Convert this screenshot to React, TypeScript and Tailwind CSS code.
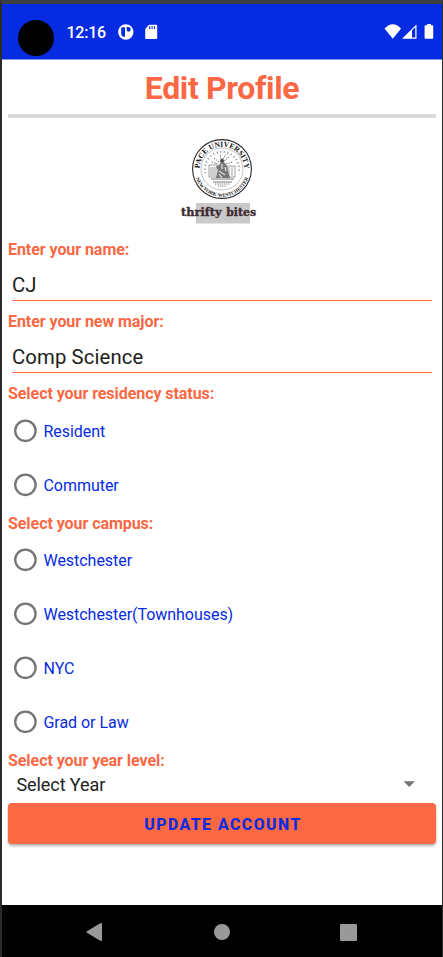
import React from "react";

function StatusBar() {
  return (
    <header className="flex h-[55px] shrink-0 items-start bg-[#062be0] text-white">
      <div className="mt-[16px] ml-[16px] size-[36px] rounded-full bg-black" />
      <span className="mt-[19px] ml-[12.4px] w-[40px] text-[16px] leading-[20px] font-medium tracking-[-0.2px] whitespace-nowrap">
        12:16
      </span>
      <svg className="mt-[20px] ml-[12px]" width="16" height="16" viewBox="0 0 16 16">
        <circle cx="7.8" cy="8" r="7.7" fill="#fff" />
        <path d="M3.2 4.2Q3.2 3.2 5.2 3.2H7V12.8H5.6Q3.2 12 3.2 10Z" fill="#062be0" />
        <path d="M8.6 3.1H10.4A2.3 2.3 0 0 1 10.4 7.7Q8.6 7.5 8.6 5.6Z" fill="#062be0" />
      </svg>
      <svg className="mt-[20px] ml-[9.6px]" width="14" height="16" viewBox="0 0 14 16">
        <path d="M5 .8H12Q13.2.8 13.2 2V14Q13.2 15 12 15H2.2Q1.2 15 1.2 14V5Z" fill="#fff" />
        <path d="M5.7 2.2V4.9M8.1 2.2V4.9M10.5 2.2V4.9" stroke="#062be0" strokeWidth="1.1" />
      </svg>
      <svg className="mt-[19px] mr-[8px] ml-auto" width="50" height="17" viewBox="0 0 50 17">
        <path d="M.5 5.6Q8.8-3 17.1 5.6L8.8 15.8Z" fill="#fff" />
        <path d="M18 15.8 32.5 1.5V15.8ZM28 7.5V14.6H31.3V4.3Z" fill="#fff" fillRule="evenodd" />
        <path d="M43.2 1H47V2.3H48.2Q49.2 2.3 49.2 3.3V14.8Q49.2 15.8 48.2 15.8H41.6Q40.6 15.8 40.6 14.8V3.3Q40.6 2.3 41.6 2.3H43.2Z" fill="#fff" />
      </svg>
    </header>
  );
}

function Logo() {
  return (
    <svg className="mx-auto block" width="100" height="100" viewBox="0 0 100 100" role="img" aria-label="Pace University thrifty bites">
      <defs>
        <path id="sealTop" d="M29.7 39A22.3 22.3 0 0 1 74.3 39" />
        <path id="sealBottom" d="M25.6 47.5A27.7 27.7 0 0 0 78.4 47.5" />
      </defs>
      <circle cx="52" cy="39" r="29.4" fill="#fff" stroke="#252525" strokeWidth="1.1" />
      <circle cx="52" cy="39" r="21" fill="none" stroke="#888" strokeWidth=".5" />
      <text fontFamily="Liberation Serif, serif" fontSize="7.6" fontWeight="700" fill="#111">
        <textPath href="#sealTop" textLength="69" startOffset=".5">PACE UNIVERSITY</textPath>
      </text>
      <text fontFamily="Liberation Serif, serif" fontSize="5.1" fontWeight="700" fill="#222">
        <textPath href="#sealBottom" textLength="68.5" startOffset=".7">NEW YORK·WESTCHESTER</textPath>
      </text>
      <path d="M35.5 43A17 17 0 1 1 68.5 43" fill="none" stroke="#888" strokeWidth="2" strokeDasharray="1 2.6" />
      <g fill="none" stroke="#555" strokeWidth=".8">
        <path d="M39 35H47V47H39ZM41 37V46M43 37V46M45 37V46M57 36H65V47H57ZM59 37V46M62 37V46" strokeOpacity=".7" />
        <path d="M49 32 44 28M48 34 41 32M54 31 59 27M56 34 63 32M51 29 50 24M53 29 56 24" strokeDasharray="1.5 1" />
        <path d="M41 49H64M43 52H62" />
        <path d="M45 54H60M48 56H57" strokeDasharray="1.2 1" />
      </g>
      <path d="M51 30Q54 29 54 32L57 36 58 41 60 48H46L48 40 46 37 50 34Z" fill="#777" />
      <path d="M52 34V39M49 41 55 45M49 44 52 48M55 37 56 41" stroke="#fff" strokeWidth="1" />
      <circle cx="52" cy="30.5" r="1.8" fill="#444" />
      <rect x="26" y="73" width="54" height="20.5" fill="#c9c9c9" />
      <g fontFamily="DejaVu Serif, serif" fontWeight="700" fontSize="10.4" fill="#3f2a32" stroke="#3f2a32" strokeWidth=".35">
        <text x="11" y="86.2" textLength="40.5" lengthAdjust="spacingAndGlyphs">thrifty</text>
        <text x="56.3" y="86.2" textLength="29.7" lengthAdjust="spacingAndGlyphs">bites</text>
      </g>
    </svg>
  );
}

function Label({ children }: { children: React.ReactNode }) {
  return (
    <div className="h-[21.6px] text-[16px] leading-[22px] font-bold tracking-[-0.06px] whitespace-nowrap text-[#fb6844]">
      {children}
    </div>
  );
}

function Field({ label, value }: { label: string; value: string }) {
  return (
    <div className="h-[72.3px]">
      <Label>{label}</Label>
      <div className="mx-[4px] mt-[8px] h-[33px] border-b-[1.5px] border-[#fb6844] text-[20.3px] leading-[34px] tracking-[0.12px] text-[#212121]">
        {value}
      </div>
    </div>
  );
}

function Choice({ text }: { text: string }) {
  return (
    <div className="flex h-[53.8px] items-center">
      <svg className="mb-[2px] ml-[5px] shrink-0" width="24" height="24" viewBox="0 0 24 24">
        <circle cx="12.4" cy="11.8" r="10.2" fill="none" stroke="#757575" strokeWidth="2.3" />
      </svg>
      <span className="ml-[6.5px] text-[16px] leading-[20px] tracking-[-0.04px] whitespace-nowrap text-[#062be0]">{text}</span>
    </div>
  );
}

export default function App() {
  return (
    <div className="flex h-[957px] w-[443px] flex-col overflow-hidden border-t-4 border-r border-l-2 border-t-[#3c3f41] border-r-[#2b2b2b] border-l-[#2b2b2b] bg-white font-['Roboto',sans-serif]">
      <StatusBar />
      <main className="flex-1 border-t border-[#8294ef] px-[6px]">
        <h1 className="h-[58px] border-b-4 border-[#d9d9d9] pt-[8px] text-center text-[32px] leading-[40px] font-bold tracking-[-0.35px] text-[#fb6844]">
          Edit Profile
        </h1>
        <div className="mt-[12px] h-[108.5px] pr-[4px]">
          <Logo />
        </div>
        <Field label="Enter your name:" value="CJ" />
        <Field label="Enter your new major:" value="Comp Science" />
        <Label>Select your residency status:</Label>
        <div className="pt-[0.4px]">
          <Choice text="Resident" />
          <Choice text="Commuter" />
        </div>
        <Label>Select your campus:</Label>
        <Choice text="Westchester" />
        <Choice text="Westchester(Townhouses)" />
        <Choice text="NYC" />
        <Choice text="Grad or Law" />
        <div className="pt-[0.3px]">
          <Label>Select your year level:</Label>
        </div>
        <div className="flex h-[26px] items-center justify-between pr-[21px] pl-[8.5px] text-[18px] leading-[26px] tracking-[-0.08px] text-[#212121]">
          <span className="pt-[1px]">Select Year</span>
          <svg width="12" height="6" viewBox="0 0 12 6">
            <path d="M.5.2H11.9L6.2 5.9Z" fill="#757575" />
          </svg>
        </div>
        <button className="mt-[6px] block h-[40.5px] w-full rounded-[4px] bg-[#fb6844] pt-[2px] pl-[2px] text-[15.8px] leading-[20px] font-extrabold tracking-[1.5px] text-[#062be0] shadow-[0_2px_3px_rgba(0,0,0,0.3)]">
          UPDATE ACCOUNT
        </button>
      </main>
      <nav className="flex h-[52px] shrink-0 items-center bg-black">
        <svg className="mt-[2px] ml-[83px]" width="18" height="20" viewBox="0 0 18 20">
          <path d="M2 9.2 14.8 1.4Q17 .3 17 2V18Q17 19.7 14.8 18.6L2 10.8Q.5 10 2 9.2Z" fill="#999" />
        </svg>
        <div className="mt-[2px] ml-[111px] size-[16px] rounded-full bg-[#999]" />
        <div className="mt-[2px] ml-[110px] size-[17px] rounded-[1px] bg-[#999]" />
      </nav>
    </div>
  );
}
